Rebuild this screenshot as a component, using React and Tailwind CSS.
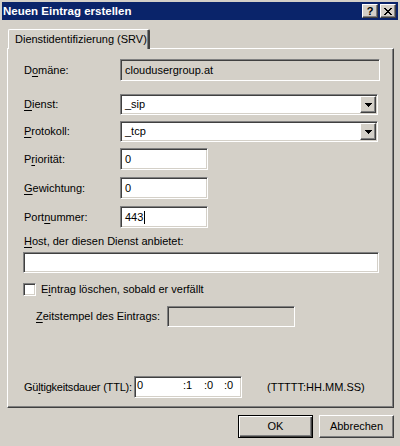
import React from 'react'

const sunken =
  'border border-t-[#808080] border-l-[#808080] border-b-white border-r-white shadow-[inset_1px_1px_0_#404040,inset_-1px_-1px_0_#d4d0c8]'
const raised =
  'border border-t-white border-l-white border-b-[#404040] border-r-[#404040] shadow-[inset_-1px_-1px_0_#808080]'

function U({ children }) {
  return <span className="underline underline-offset-[2px] decoration-1">{children}</span>
}

function Arrow() {
  return (
    <svg width="7" height="4" viewBox="0 0 7 4" shapeRendering="crispEdges">
      <path d="M0 0h7v1h-1v1h-1v1h-1v1h-1v-1h-1v-1h-1v-1h-1z" fill="#000" />
    </svg>
  )
}

function Combo({ value }) {
  return (
    <div className={`flex items-center w-[258px] h-[21px] bg-white ${sunken}`}>
      <span className="pl-[4px]">{value}</span>
      <div className={`ml-auto mr-px h-[17px] w-[16px] bg-[#d4d0c8] flex items-center justify-center ${raised}`}>
        <Arrow />
      </div>
    </div>
  )
}

function Field({ value, caret, className }) {
  return (
    <div className={`flex items-center h-[22px] bg-white ${sunken} ${className}`}>
      <span className="pl-[4px]">{value}</span>
      {caret && <span className="w-px h-[13px] bg-black ml-px" />}
    </div>
  )
}

function Row({ label, className, children }) {
  return (
    <div className={`flex items-center ${className}`}>
      <div className="w-[97px] shrink-0 pl-px whitespace-nowrap">{label}</div>
      {children}
    </div>
  )
}

export default function App() {
  return (
    <div
      className="w-[400px] h-[446px] bg-[#d4d0c8] text-black text-[11px] leading-[13px] pt-[2px] px-[2px] overflow-hidden"
      style={{ fontFamily: '"Liberation Sans", Arial, sans-serif' }}
    >
      {/* title bar */}
      <div className="h-[18px] bg-[#0a246a] flex items-center pl-[1px] pr-[2px]">
        <span className="text-white font-bold text-[11.5px]">Neuen Eintrag erstellen</span>
        <div className="ml-auto flex gap-[2px]">
          <div className={`w-[16px] h-[14px] bg-[#d4d0c8] flex items-center justify-center font-bold text-[11px] leading-none ${raised}`}>
            ?
          </div>
          <div className={`w-[16px] h-[14px] bg-[#d4d0c8] flex items-center justify-center ${raised}`}>
            <svg width="8" height="7" viewBox="0 0 8 7" shapeRendering="crispEdges">
              <path d="M0 0h2v1h1v1h2v-1h1v-1h2v1h-1v1h-1v1h-1v1h1v1h1v1h1v1h-2v-1h-1v-1h-2v1h-1v1h-2v-1h1v-1h1v-1h1v-1h-1v-1h-1v-1h-1z" fill="#000" />
            </svg>
          </div>
        </div>
      </div>

      <div className="px-[5px] pt-[9px]">
        {/* tab */}
        <div className="relative z-10 ml-[1px] w-[142px] h-[20px] -mb-px bg-[#d4d0c8] border-t border-l border-t-white border-l-white border-r-2 border-r-[#404040] rounded-t-[2px] shadow-[inset_-1px_0_0_#808080] flex items-center pl-[6px] whitespace-nowrap">
          Dienstidentifizierung (SRV)
        </div>

        {/* page */}
        <div className="h-[360px] w-[387px] border border-t-white border-l-white border-b-[#404040] border-r-[#404040] shadow-[inset_-1px_-1px_0_#808080] pl-[15px] pt-[10px] flex flex-col">
          <Row label={<>D<U>o</U>mäne:</>}>
            <div className={`flex items-center w-[260px] h-[22px] ${sunken}`}>
              <span className="pl-[4px]">cloudusergroup.at</span>
            </div>
          </Row>
          <Row label={<><U>D</U>ienst:</>} className="mt-[13px]">
            <Combo value="_sip" />
          </Row>
          <Row label={<><U>P</U>rotokoll:</>} className="mt-[6px]">
            <Combo value="_tcp" />
          </Row>
          <Row label={<>P<U>r</U>iorität:</>} className="mt-[6px]">
            <Field value="0" className="w-[88px]" />
          </Row>
          <Row label={<><U>G</U>ewichtung:</>} className="mt-[7px]">
            <Field value="0" className="w-[88px]" />
          </Row>
          <Row label={<>Port<U>n</U>ummer:</>} className="mt-[7px]">
            <Field value="443" caret className="w-[88px]" />
          </Row>

          <div className="mt-[7px] pl-px"><U>H</U>ost, der diesen Dienst anbietet:</div>
          <div className={`mt-[4px] w-[356px] h-[21px] bg-white ${sunken}`} />

          <div className="mt-[10px] flex items-center">
            <div className={`w-[13px] h-[13px] bg-white ${sunken}`} />
            <span className="ml-[5px]">E<U>i</U>ntrag löschen, sobald er verfällt</span>
          </div>

          <div className="mt-[10px] ml-[13px] flex items-center">
            <span className="w-[131px] shrink-0 whitespace-nowrap"><U>Z</U>eitstempel des Eintrags:</span>
            <div className={`w-[128px] h-[21px] ${sunken}`} />
          </div>

          <div className="mt-[49px] flex items-center">
            <span className="w-[111px] shrink-0 pl-px whitespace-nowrap tracking-[-0.2px]">Gü<U>l</U>tigkeitsdauer (TTL):</span>
            <div className={`w-[108px] shrink-0 h-[22px] bg-white flex items-start pt-[2px] pl-[2px] ${sunken}`}>
              <span className="w-[46px]">0</span>
              <span className="w-[21px]">:1</span>
              <span className="w-[20px]">:0</span>
              <span>:0</span>
            </div>
            <span className="ml-[25px] whitespace-nowrap">(TTTTT:HH.MM.SS)</span>
          </div>
        </div>

        {/* buttons */}
        <div className="mt-[7px] w-[387px] flex justify-end gap-[6px]">
          <div className="w-[75px] h-[23px] border border-black bg-[#d4d0c8] shadow-[inset_1px_1px_0_#fff,inset_-1px_-1px_0_#404040,inset_-2px_-2px_0_#808080] flex items-center justify-center">
            OK
          </div>
          <div className={`w-[75px] h-[23px] bg-[#d4d0c8] flex items-center justify-center ${raised}`}>
            Abbrechen
          </div>
        </div>
      </div>
    </div>
  )
}
